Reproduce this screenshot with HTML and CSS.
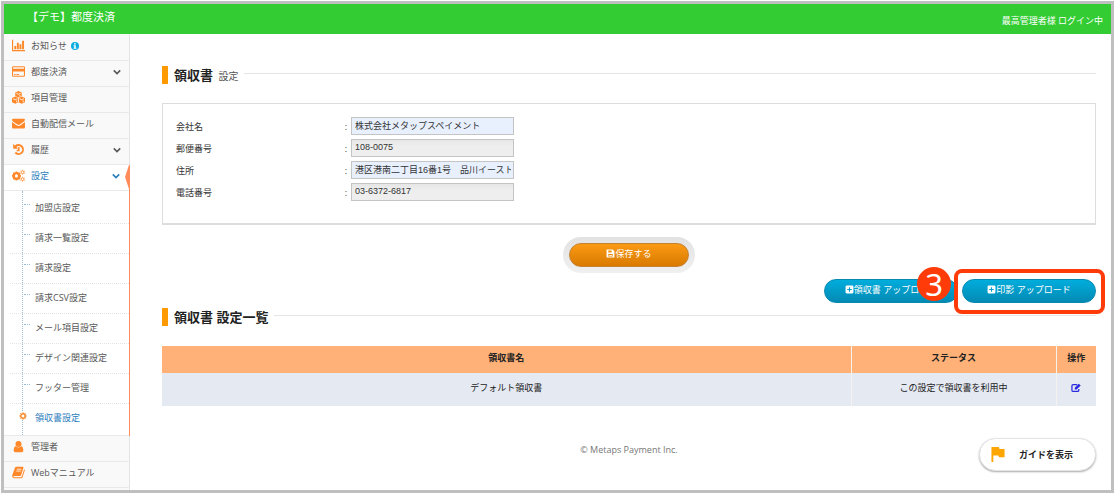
FILE: index.html
```html
<!DOCTYPE html>
<html lang="ja">
    <head>
        <meta charset="UTF-8">
        <title>【デモ】都度決済</title>
        <link rel="stylesheet" href="styles.css">
    </head>
    <body>
        <div id="container">
            <header id="header">
                <a href="#" class="brand">【デモ】都度決済</a>
                <span class="login">最高管理者様 ログイン中</span>
            </header>
            <div id="wrap">
                <nav id="sidebar">
                    <ul class="menu">
                        <li>
                            <a href="#">
                                <svg class="icon" viewBox="0 0 16 16"><path d="M0 1h1.400v12.600H16V15H0zM2.800 8.500h2.400v4H2.800zM6 4.500h2.400v8H6zM9.200 6.500h2.400v6H9.200zM12.400 2h2.400v10.500h-2.400z"/></svg>
                                お知らせ
                                <svg class="info" viewBox="0 0 16 16"><circle cx="8" cy="8" r="8"/><path fill="#fff" d="M6 2.500h3.500v2.500H6zM5 6.500h4.500v5H11v2H5v-2h1.500v-3H5z"/></svg>
                            </a>
                        </li>
                        <li>
                            <a href="#">
                                <svg class="icon" viewBox="0 0 16 16"><path fill-rule="evenodd" d="M1.500 1.500h13Q16 1.500 16 3v10q0 1.500-1.500 1.500h-13Q0 14.500 0 13V3Q0 1.500 1.500 1.500zM1.300 2.800v1.700h13.400V2.800zM1.300 8v5.200h13.400V8zM2.500 11h2v1.200h-2zM5.500 11h3v1.200h-3z"/></svg>
                                都度決済
                                <svg class="arrow" viewBox="0 0 10 10"><path d="M1 3l4 4 4-4"/></svg>
                            </a>
                        </li>
                        <li>
                            <a href="#">
                                <svg class="icon" viewBox="0 0 16 16"><path d="M8 0l4 1.700v4.500L8 8 4 6.200V1.700zM4 6.700l4 1.800v5.200L4 15.700 0 13.700V8.500zM12 6.700l4 1.800v5.200l-4 2-4-2V8.500z"/><path class="cut" d="M5.300 2.800L8 4l2.700-1.200M8 8.300v5.300M1.300 9.500L4 10.700l2.700-1.200M5.800 11.500v2.500M9.300 9.500l2.700 1.200 2.700-1.200M13.800 11.500v2.500M9.800 5v2"/></svg>
                                項目管理
                            </a>
                        </li>
                        <li>
                            <a href="#">
                                <svg class="icon" viewBox="0 0 16 16"><path d="M1.500 2h13Q16 2 16 3.500q0 1-1.500 2.200L9.300 9.300q-1.300.8-2.600 0L1.500 5.700Q0 4.600 0 3.500 0 2 1.500 2zM0 6.300l6 4.200q2 1.100 4 0l6-4.200v6.200q0 1.500-1.500 1.500h-13Q0 14 0 12.500z"/></svg>
                                自動配信メール
                            </a>
                        </li>
                        <li>
                            <a href="#">
                                <svg class="icon" viewBox="0 0 16 16"><path d="M1.500 1v6h6L5.500 5A4.200 4.200 0 1 1 5 10.900L3.200 12.600A6.700 6.700 0 1 0 3.500 3zM7.500 5h1.800v5H5.800V8.300h1.700z"/></svg>
                                履歴
                                <svg class="arrow" viewBox="0 0 10 10"><path d="M1 3l4 4 4-4"/></svg>
                            </a>
                        </li>
                        <li class="selected">
                            <a href="#">
                                <svg class="icon" viewBox="0 0 16 16"><circle class="ring" cx="5.500" cy="8.500" r="3.400"/><path class="teeth" d="M5.500 3v1.500M5.500 12.500V14M0 8.500h1.500M9.500 8.500H11M1.600 4.600l1 1M8.400 11.400l1 1M9.400 4.600l-1 1M2.600 11.400l-1 1"/><circle class="ring small" cx="13" cy="4" r="1.700"/><path class="teeth small" d="M13 1v1M13 6v1M10.400 2.500l.9.500M14.700 5l.9.500M15.600 2.500l-.9.500M11.300 5l-.9.500"/><circle class="ring small" cx="13" cy="12.500" r="1.700"/><path class="teeth small" d="M13 9.500v1M13 14.500v1M10.400 11l.9.500M14.700 13.500l.9.500M15.600 11l-.9.500M11.300 13.500l-.9.500"/></svg>
                                設定
                                <svg class="arrow" viewBox="0 0 10 10"><path d="M1 3l4 4 4-4"/></svg>
                            </a>
                            <ul class="submenu">
                                <li><a href="#">加盟店設定</a></li>
                                <li><a href="#">請求一覧設定</a></li>
                                <li><a href="#">請求設定</a></li>
                                <li><a href="#">請求CSV設定</a></li>
                                <li><a href="#">メール項目設定</a></li>
                                <li><a href="#">デザイン関連設定</a></li>
                                <li><a href="#">フッター管理</a></li>
                                <li class="current">
                                    <svg class="gear" viewBox="0 0 16 16"><circle class="ring" cx="8" cy="8" r="4.500"/><path class="teeth" d="M8 .5v2M8 13.500v2M.5 8h2M13.500 8h2M2.700 2.700l1.500 1.500M11.800 11.800l1.500 1.500M13.300 2.700l-1.500 1.500M4.200 11.800l-1.500 1.500"/></svg>
                                    <a href="#">領収書設定</a>
                                </li>
                            </ul>
                        </li>
                        <li>
                            <a href="#">
                                <svg class="icon" viewBox="0 0 16 16"><circle cx="8" cy="5" r="3.700"/><path d="M4.500 7.500Q8 11 11.500 7.500 14 8.500 14 12.500 14 15 12 15H4q-2 0-2-2.500 0-4 2.500-5z"/></svg>
                                管理者
                            </a>
                        </li>
                        <li>
                            <a href="#">
                                <svg class="icon" viewBox="0 0 16 16"><path d="M5.500 1H13q1.500 0 1 1.500L11.300 11q-.4 1.200-1.600 1.200H2.500q-.8 0-.8.700 0 .8 1 .8H11q.7 0 1-.8L15 4q1 .5.700 1.500l-2.700 8.300Q12.600 15 11.300 15H2.800Q.8 15 .3 13q-.3-1 .1-2L3.500 2.500Q4 1 5.500 1z"/><path class="cut" d="M6 4h5.500M5.300 6.300h5.500"/></svg>
                                Webマニュアル
                            </a>
                        </li>
                    </ul>
                </nav>
                <main id="content">
                    <h1 class="title"><span>領収書 <small>設定</small></span></h1>
                    <form class="panel">
                        <div class="row">
                            <label for="company">会社名</label>
                            <input type="text" id="company" value="株式会社メタップスペイメント">
                        </div>
                        <div class="row">
                            <label for="zip">郵便番号</label>
                            <input type="text" id="zip" class="readonly" value="108-0075" readonly>
                        </div>
                        <div class="row">
                            <label for="address">住所</label>
                            <input type="text" id="address" value="港区港南二丁目16番1号　品川イースト">
                        </div>
                        <div class="row">
                            <label for="tel">電話番号</label>
                            <input type="text" id="tel" class="readonly" value="03-6372-6817" readonly>
                        </div>
                    </form>
                    <div class="save">
                        <button type="button" class="btn orange"><svg viewBox="0 0 16 16"><path fill-rule="evenodd" d="M1 1h11l3 3v11H1zM4 2.500v3.500h6V2.500zM4 9v4.500h8V9zM5 10.500h6v1.500H5z"/></svg>保存する</button>
                    </div>
                    <div class="upload">
                        <button type="button" class="btn blue"><svg viewBox="0 0 16 16"><path fill-rule="evenodd" d="M3 1h10q2 0 2 2v10q0 2-2 2H3q-2 0-2-2V3q0-2 2-2zM7 4v3H4v2h3v3h2V9h3V7H9V4z"/></svg>領収書 アップロード</button>
                        <div class="focus">
                            <button type="button" class="btn blue"><svg viewBox="0 0 16 16"><path fill-rule="evenodd" d="M3 1h10q2 0 2 2v10q0 2-2 2H3q-2 0-2-2V3q0-2 2-2zM7 4v3H4v2h3v3h2V9h3V7H9V4z"/></svg>印影 アップロード</button>
                            <span class="step">3</span>
                        </div>
                    </div>
                    <h2 class="title"><span>領収書 設定一覧</span></h2>
                    <table class="list">
                        <thead>
                            <tr>
                                <th>領収書名</th>
                                <th class="status">ステータス</th>
                                <th class="action">操作</th>
                            </tr>
                        </thead>
                        <tbody>
                            <tr>
                                <td>デフォルト領収書</td>
                                <td>この設定で領収書を利用中</td>
                                <td>
                                    <a href="#" aria-label="編集"><svg viewBox="0 0 16 16"><path class="line" d="M10 2.500H3.500Q1.500 2.500 1.500 4.500v7q0 2 2 2h7q2 0 2-2V9.500"/><path d="M12.500 1L15.500 4 9 10.500H6V7.500z"/></svg></a>
                                </td>
                            </tr>
                        </tbody>
                    </table>
                    <footer>© Metaps Payment Inc.</footer>
                </main>
            </div>
            <button type="button" class="guide"><svg viewBox="0 0 14 16"><path d="M0 0h8l.5 2H14v9H8l-.5-2H2v7H0z"/></svg>ガイドを表示</button>
        </div>
    </body>
</html>
```

FILE: styles.css
```css
*{
    margin:0;
    padding:0;
    box-sizing:border-box;
}
body{
    padding:1px;
    background-color:#fff;
    color:#333;
    font-family:"Open Sans","Noto Sans CJK JP",sans-serif;
    font-size:9px;
    line-height:16px;
}
ul{
    list-style:none;
}
a{
    color:inherit;
    text-decoration:none;
}
button,input{
    font-family:inherit;
    font-size:inherit;
}
svg{
    fill:currentColor;
    flex:none;
}
#container{
    display:flex;
    flex-direction:column;
    min-height:calc(100vh - 2px);
    border:3px solid #bfbfbf;
    position:relative;
}
#header{
    display:flex;
    justify-content:space-between;
    height:30px;
    padding:0 8px 0 23px;
    background-color:#3c3;
    color:#fff;
}
.brand{
    font-size:11px;
    line-height:26px;
}
.login{
    line-height:34px;
}
#wrap{
    display:flex;
    flex:1;
}

/* sidebar */
#sidebar{
    width:126px;
    padding-top:1px;
    background:linear-gradient(to left,#e4e4e4 1px,#f9f9f9 1px);
    color:#585858;
}
.menu > li{
    position:relative;
}
.menu > li > a{
    display:flex;
    align-items:center;
    height:26px;
    padding:0 9px 4px 8px;
    border-bottom:1px solid #e9e9e9;
}
.icon{
    width:13px;
    height:13px;
    margin-right:6px;
    fill:#ff892a;
    color:#ff892a;
}
.cut{
    fill:none;
    stroke:#fff;
}
.ring{
    fill:none;
    stroke:#ff892a;
    stroke-width:3;
}
.teeth{
    fill:none;
    stroke:#ff892a;
    stroke-width:2;
}
.ring.small,.teeth.small{
    stroke-width:1;
}
.info{
    width:8px;
    height:8px;
    margin-left:4px;
    fill:#0aace0;
}
.arrow{
    width:8px;
    height:8px;
    margin-left:auto;
    fill:none;
    stroke:currentColor;
    stroke-width:2;
}
.menu > .selected{
    background-color:#fff;
    border-right:1px solid #ff8c5a;
}
.selected > a{
    padding-right:8px;
    color:#2b7dbc;
}
.selected:after{
    content:"";
    position:absolute;
    top:0;
    right:0;
    border:solid transparent;
    border-width:12px 4px 12px 0;
    border-right-color:#ff8c5a;
}
.submenu{
    position:relative;
    padding:2px 0 2px 6px;
    border-bottom:1px solid #e9e9e9;
}
.submenu:before{
    content:"";
    position:absolute;
    top:0;
    bottom:0;
    left:18px;
    border-left:1px dotted #9dbdd6;
}
.submenu li{
    position:relative;
    height:30px;
    padding:4px 0 0 25px;
    border-top:1px dotted #e4e4e4;
    line-height:20px;
}
.submenu li:first-child{
    border-top-color:transparent;
}
.submenu li:before{
    content:"";
    position:absolute;
    top:10px;
    left:14px;
    width:6px;
    border-top:1px dotted #9dbdd6;
}
.submenu .current{
    color:#2b7dbc;
}
.submenu .current:before{
    display:none;
}
.gear{
    position:absolute;
    top:8px;
    left:9px;
    width:8px;
    height:8px;
    background-color:#fff;
}

/* content */
#content{
    flex:1;
    padding:31px 15px 0 32px;
}
.title{
    display:flex;
    align-items:center;
    gap:6px;
    height:20px;
    color:#222;
    font-size:13px;
}
.title:before{
    content:"";
    width:6px;
    height:18px;
    background-color:#f90;
}
.title:after{
    content:"";
    flex:1;
    height:1px;
    margin-top:-4px;
    background-color:#e5e5e5;
}
.title small{
    margin-left:2px;
    color:#555;
    font-size:10px;
    font-weight:normal;
}
.panel{
    display:flex;
    flex-direction:column;
    gap:4px;
    margin-top:18px;
    padding:13px 13px 22px;
    border:1px solid #ddd;
    border-bottom-width:2px;
}
.row{
    display:flex;
    align-items:center;
}
.row label{
    display:flex;
    justify-content:space-between;
    width:175px;
    padding:1px 4px 0 0;
}
.row label:after{
    content:":";
}
.row input{
    width:163px;
    height:18px;
    padding:0 2px 2px 3px;
    border:1px solid #c4c4c4;
    background-color:#e8f0fe;
    color:#333;
    font-family:"Liberation Sans","Noto Sans CJK JP",sans-serif;
}
.row .readonly{
    background:linear-gradient(#e6e6e6,#eee 6px);
}
.btn{
    display:flex;
    align-items:center;
    justify-content:center;
    width:134px;
    height:24px;
    padding-bottom:4px;
    border:1px solid #078ab0;
    border-radius:12px;
    color:#fff;
    cursor:pointer;
}
.btn svg{
    width:9px;
    height:9px;
}
.blue{
    background:linear-gradient(#00addc,#0589b4);
}
.orange{
    width:120px;
    border-color:#c48232;
    background:linear-gradient(#fa9a14,#d97a00);
}
.save{
    width:132px;
    margin:12px auto 0;
    padding:6px;
    border-radius:18px;
    background:linear-gradient(#e2e2e2,#f0f0f0);
}
.upload{
    display:flex;
    justify-content:flex-end;
    gap:4px;
    margin-top:6px;
}
.focus{
    position:relative;
}
.focus:after{
    content:"";
    position:absolute;
    top:-10px;
    right:-9px;
    bottom:-11px;
    left:-8px;
    border:4px solid #ff3b0a;
    border-radius:8px;
    pointer-events:none;
}
.step{
    position:absolute;
    top:-12px;
    left:-45px;
    width:34px;
    height:34px;
    border-radius:50%;
    background-color:#ff3b0a;
    color:#fff;
    font-family:"Noto Sans",sans-serif;
    font-size:31px;
    line-height:34px;
    text-align:center;
}
h2.title{
    margin-top:4px;
}
.list{
    width:100%;
    margin-top:19px;
    border-collapse:collapse;
    color:#222;
    text-align:center;
}
.list th{
    height:27px;
    padding-bottom:4px;
    background-color:#ffb177;
}
.list td{
    height:33px;
    padding-bottom:4px;
    background-color:#e5e9f2;
}
.list th + th,.list td + td{
    border-left:1px solid #f5f1ef;
}
.status{
    width:205px;
}
.action{
    width:40px;
}
.list a{
    color:#2a2ae0;
}
.list svg{
    width:10px;
    height:10px;
    vertical-align:middle;
}
.line{
    fill:none;
    stroke:currentColor;
    stroke-width:2;
}
footer{
    margin-top:36px;
    color:#777;
    text-align:center;
}
.guide{
    position:absolute;
    right:15px;
    bottom:19px;
    display:flex;
    align-items:center;
    gap:14px;
    width:117px;
    height:33px;
    padding-left:11px;
    border:1px solid #e4e4e4;
    border-radius:17px;
    background-color:#fff;
    box-shadow:0 1px 2px #aaa;
    color:#222;
    font-weight:bold;
    cursor:pointer;
}
.guide svg{
    width:14px;
    height:15px;
    fill:#ffa500;
}
```
